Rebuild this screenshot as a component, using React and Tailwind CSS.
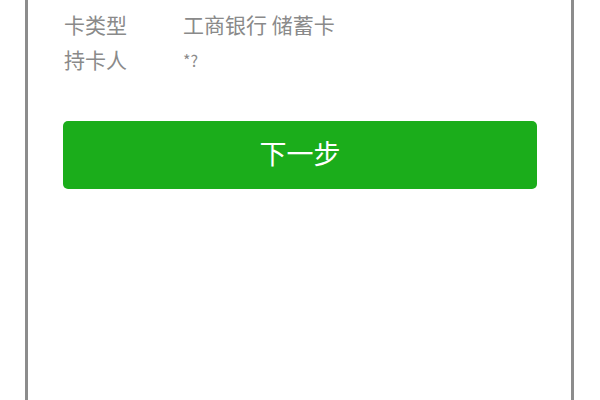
export default function App() {
  const font = { fontFamily: '"Noto Sans CJK SC", "Noto Sans", sans-serif' };
  return (
    <div className="w-[600px] h-[400px] bg-white overflow-hidden" style={font}>
      <div className="ml-[25px] w-[549px] h-[400px] border-x-[3px] border-[#8c8c8c] pl-[35px] pr-[34px] pt-[7px]">
        <div className="flex items-center h-[35px] text-[21px] text-[#8a8a8a]">
          <div className="w-[120px] pl-[1px]">卡类型</div>
          <div>工商银行 储蓄卡</div>
        </div>
        <div className="flex items-center h-[35px] text-[21px] text-[#8a8a8a]">
          <div className="w-[120px] pl-[1px]">持卡人</div>
          <div className="text-[16px]">*?</div>
        </div>
        <div className="mt-[44px] h-[68px] pb-[3px] rounded-[5px] bg-[#1bad1b] flex items-center justify-center text-white text-[27px]">
          下一步
        </div>
      </div>
    </div>
  );
}
